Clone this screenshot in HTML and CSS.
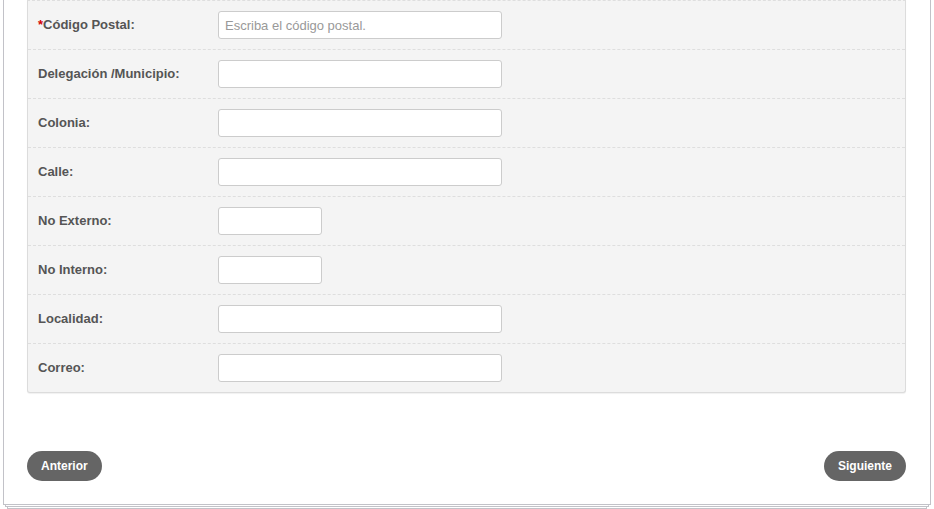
FILE: index.html
```html
<!DOCTYPE html>
<html lang="es">

<head>
    <meta charset="UTF-8">
    <meta name="viewport" content="width=device-width, initial-scale=1.0">
    <title>Domicilio</title>
    <link rel="stylesheet" href="styles.css">
</head>

<body>
    <div class="stack">
        <form action="#" class="step">
            <div class="step__panel">
                <div class="field">
                    <label><span class="req">*</span>Código Postal:</label>
                    <input type="text" class="input input--wide" placeholder="Escriba el código postal.">
                </div>
                <div class="field">
                    <label>Delegación /Municipio:</label>
                    <input type="text" class="input input--wide">
                </div>
                <div class="field">
                    <label>Colonia:</label>
                    <input type="text" class="input input--wide">
                </div>
                <div class="field">
                    <label>Calle:</label>
                    <input type="text" class="input input--wide">
                </div>
                <div class="field">
                    <label>No Externo:</label>
                    <input type="text" class="input input--short">
                </div>
                <div class="field">
                    <label>No Interno:</label>
                    <input type="text" class="input input--short">
                </div>
                <div class="field">
                    <label>Localidad:</label>
                    <input type="text" class="input input--wide">
                </div>
                <div class="field">
                    <label>Correo:</label>
                    <input type="text" class="input input--wide">
                </div>
            </div>
            <div class="step__nav">
                <button type="button" class="btn">Anterior</button>
                <button type="button" class="btn">Siguiente</button>
            </div>
        </form>
        <div class="sheet sheet--1"></div>
        <div class="sheet sheet--2"></div>
    </div>
</body>

</html>
```

FILE: styles.css
```css
* {
    margin: 0;
    padding: 0;
    box-sizing: border-box;
}

body {
    background: #fff;
    font-family: "Liberation Sans", Arial, sans-serif;
}

/* the form is scrolled: its top edge sits above the window */
.stack {
    width: 928px;
    margin: -21px 0 0 3px;
}

.step {
    padding: 20px 24px 23px 23px;
    background: #fff;
    border: 1px solid #c2c2c8;
}

/* paper sheets stacked under the form */
.sheet {
    height: 2px;
    background: #fff;
    border: 1px solid #c2c2c8;
    border-top: none;
}

.sheet--1 {
    margin: 0 2px;
}

.sheet--2 {
    margin: 0 4px;
}

.step__panel {
    background: #f4f4f4;
    border: 1px solid #dcdcdc;
    border-top: 1px dashed #dedede;
    border-radius: 0 0 3px 3px;
    box-shadow: 0 1px 1px rgba(0, 0, 0, .06);
}

.field {
    display: grid;
    grid-template-columns: 180px 1fr;
    align-items: center;
    height: 49px;
    padding: 0 0 0 10px;
    border-top: 1px dashed #dedede;
}

.field:first-child {
    height: 48px;
    border-top: none;
}

.field label {
    padding-bottom: 2px;
    font-size: 13px;
    font-weight: bold;
    color: #555;
}

.req {
    color: #d40000;
}

.input {
    height: 28px;
    border: 1px solid #ccc;
    border-radius: 3px;
    background: #fff;
    padding: 0 6px;
    font-family: inherit;
    font-size: 13px;
    color: #555;
    outline: none;
}

.input::placeholder {
    color: #999;
}

.input--wide {
    width: 284px;
}

.input--short {
    width: 104px;
}

.step__nav {
    display: flex;
    justify-content: space-between;
    margin-top: 58px;
}

.btn {
    height: 30px;
    padding: 0 14px;
    border: none;
    border-radius: 15px;
    background: #656565;
    color: #fff;
    font-family: inherit;
    font-size: 12px;
    font-weight: bold;
    cursor: pointer;
}
```
